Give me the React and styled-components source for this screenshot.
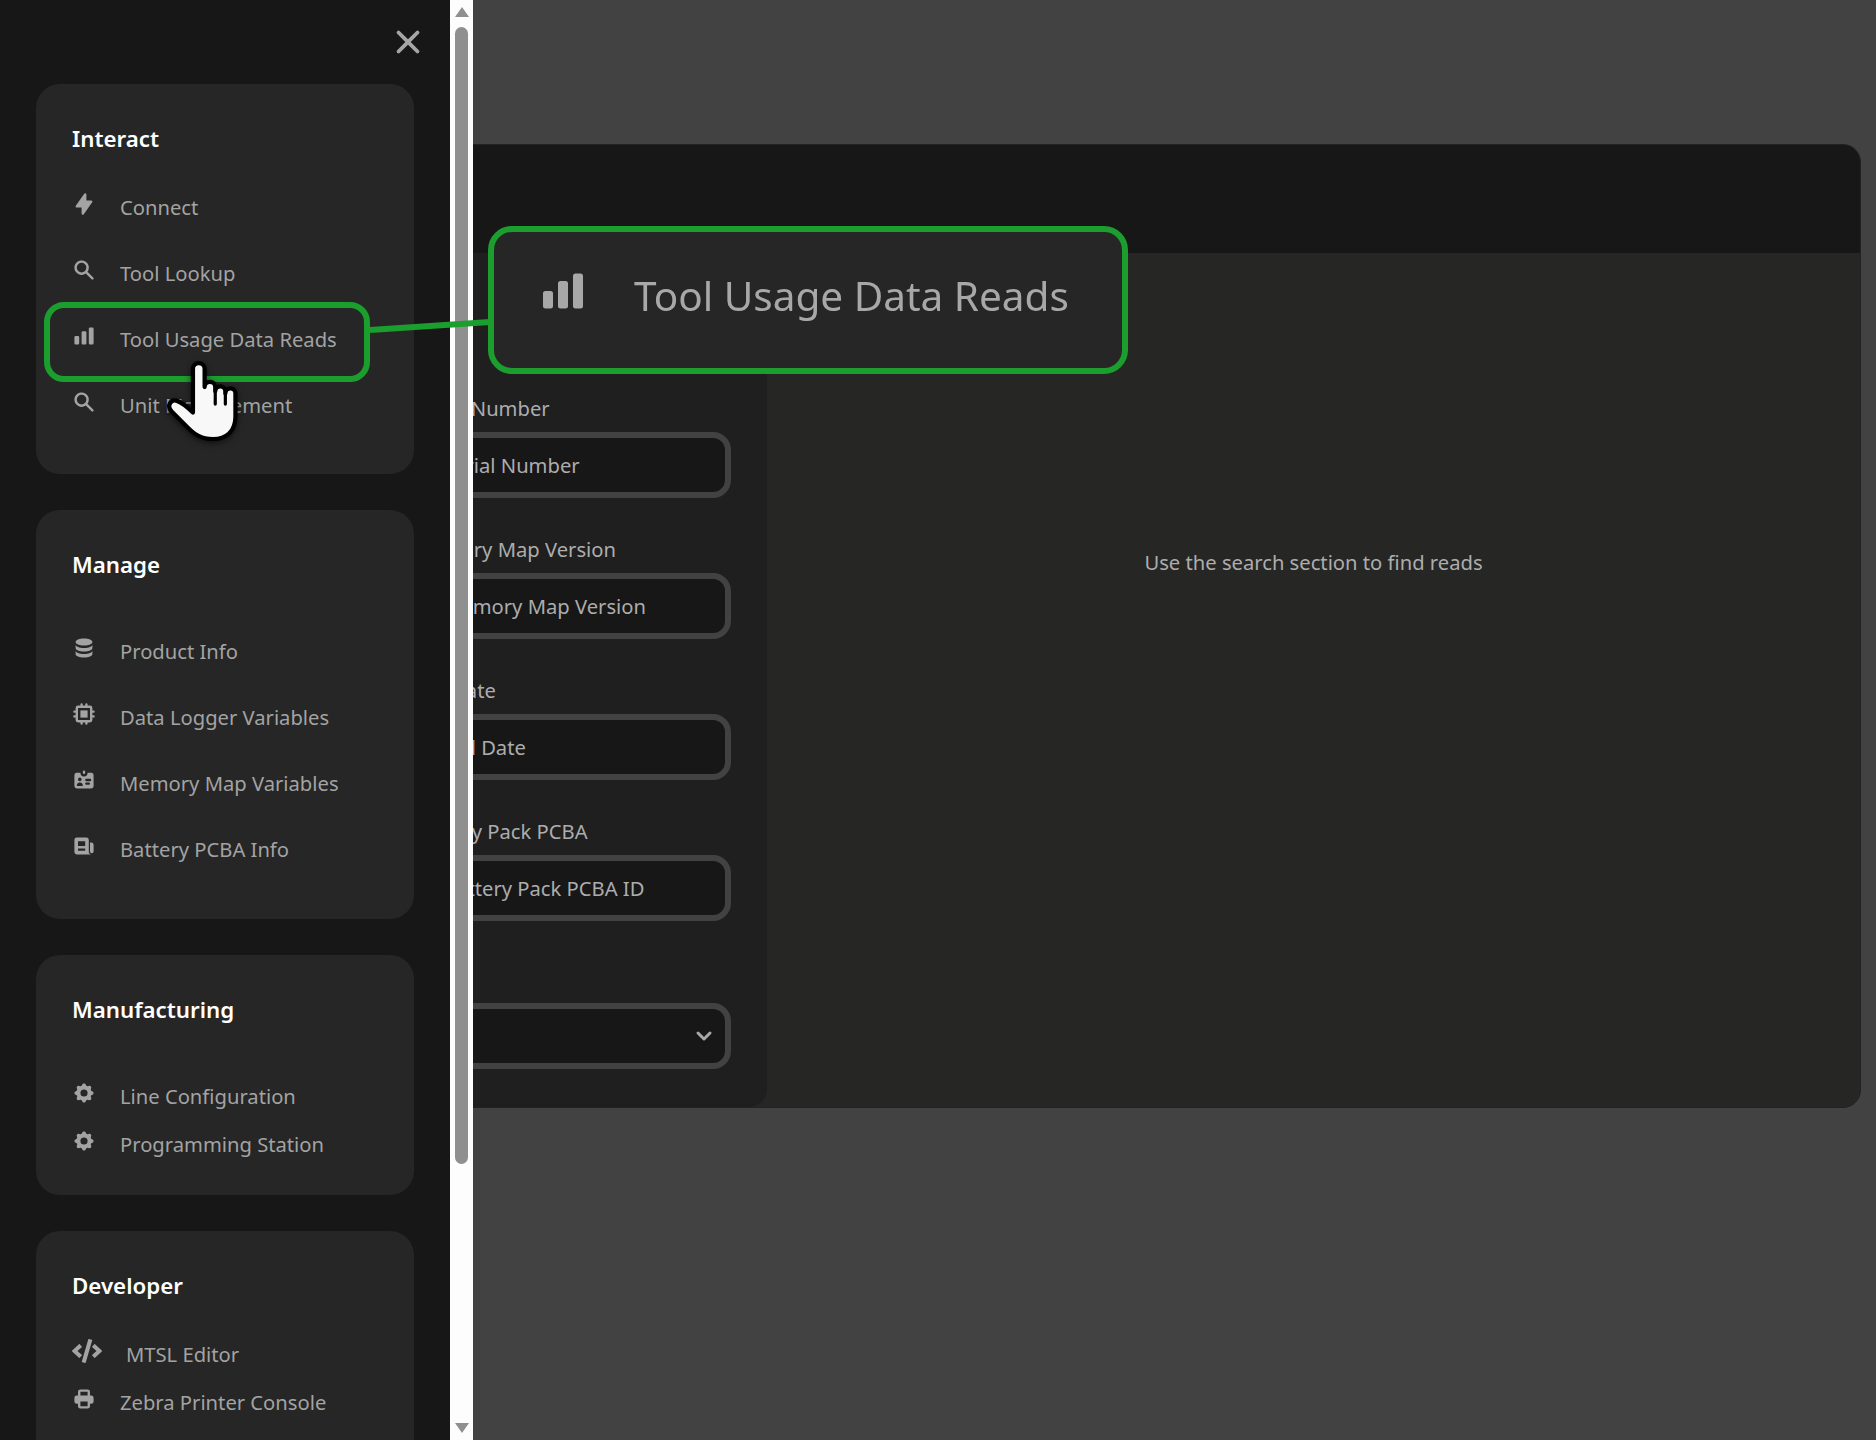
import React from "react";
import styled, { createGlobalStyle } from "styled-components";
import {
  HiLightningBolt, HiSearch, HiChartBar, HiDatabase, HiChip, HiIdentification,
  HiNewspaper, HiCog, HiPrinter, HiX, HiChevronDown,
} from "react-icons/hi";
import { FaCode } from "react-icons/fa";

const Global = createGlobalStyle`
  html, body { margin: 0; padding: 0; background: #424242; }
  body { font-family: "Noto Sans", "Open Sans", sans-serif; overflow: hidden; }
  * { box-sizing: border-box; }
`;

const Stage = styled.div`
  position: relative;
  width: 1876px;
  height: 1440px;
  overflow: hidden;
  background: #424242;
`;

const Page = styled.main`
  height: 100%;
  padding: 144px 15px 0 383px;
`;

const Panel = styled.section`
  height: 964px;
  display: flex;
  flex-direction: column;
  border: 1px solid #222222;
  border-radius: 18px;
  overflow: hidden;
  background: #262625;
`;

const PanelHead = styled.header`
  height: 108px;
  flex: none;
  background: #171717;
`;

const PanelBody = styled.div`
  flex: 1;
  display: flex;
  min-height: 0;
`;

const Form = styled.form`
  width: 383px;
  flex: none;
  display: flex;
  flex-direction: column;
  padding: 141px 36px 0 29px;
  background: #1f1f1f;
  border-bottom-right-radius: 18px;
`;

const Field = styled.div`
  display: flex;
  flex-direction: column;
  margin-top: ${(p) => p.$top || 0}px;
`;

const Label = styled.label`
  height: 28px;
  margin-bottom: 10px;
  font-size: 20.2px;
  line-height: 28px;
  color: #adadad;
  white-space: nowrap;
`;

const TextInput = styled.input`
  width: 100%;
  height: 66px;
  padding: 0 20px 0 24px;
  border: 6px solid #424242;
  border-radius: 18px;
  outline: none;
  background: #171717;
  font: inherit;
  font-size: 20.2px;
  color: #adadad;
  &::placeholder { color: #adadad; opacity: 1; }
`;

const SelectBox = styled.div`
  height: 66px;
  display: flex;
  align-items: center;
  justify-content: flex-end;
  padding-right: 6px;
  border: 6px solid #424242;
  border-radius: 18px;
  background: #171717;
  color: #a8a8a8;
  font-size: 30px;
`;

const Results = styled.div`
  flex: 1;
  padding-top: 295px;
  text-align: center;
  font-size: 20.2px;
  line-height: 28px;
  color: #adadad;
`;

const Drawer = styled.aside`
  position: absolute;
  top: 0;
  left: 0;
  bottom: 0;
  width: 473px;
  display: flex;
`;

const DrawerContent = styled.nav`
  width: 450px;
  flex: none;
  overflow: hidden;
  background: #171717;
`;

const CloseRow = styled.div`
  height: 84px;
  display: flex;
  align-items: center;
  justify-content: flex-end;
  padding-right: 23px;
  font-size: 38px;
  color: #a6a6a6;
  svg { display: block; }
`;

const Cards = styled.div`
  display: flex;
  flex-direction: column;
  gap: 36px;
  padding: 0 36px;
`;

const Card = styled.section`
  padding: 36px 36px ${(p) => p.$bottom}px;
  border-radius: 24px;
  background: #262626;
`;

const CardTitle = styled.h2`
  height: 38px;
  margin: 0 0 ${(p) => p.$gap}px;
  font-size: 22.3px;
  font-weight: 600;
  line-height: 38px;
  color: #ffffff;
`;

const NavRow = styled.a`
  height: ${(p) => p.$h}px;
  display: flex;
  align-items: center;
  gap: 24px;
  font-size: 20.2px;
  color: #a3a3a3;
  white-space: nowrap;
  svg {
    flex: none;
    width: ${(p) => (p.$wide ? 30 : 24)}px;
    height: 24px;
    margin-bottom: 6px;
  }
`;

const Scrollbar = styled.div`
  width: 23px;
  flex: none;
  display: flex;
  flex-direction: column;
  align-items: center;
  padding: 7px 0;
  background: #fdfdfd;
`;

const Arrow = styled.div`
  width: 0;
  height: 0;
  flex: none;
  border-left: 7.5px solid transparent;
  border-right: 7.5px solid transparent;
  ${(p) => (p.$down ? "border-top: 10px solid #8f8f8f;" : "border-bottom: 10px solid #8f8f8f;")}
`;

const Thumb = styled.div`
  width: 13px;
  height: 1137px;
  margin-top: 10px;
  margin-bottom: auto;
  border-radius: 7px;
  background: #8f8f8f;
`;

const Highlight = styled.div`
  position: absolute;
  left: 44px;
  top: 302px;
  width: 326px;
  height: 80px;
  border: 6px solid #1b9e2e;
  border-radius: 20px;
`;

const Connector = styled.svg`
  position: absolute;
  left: 368px;
  top: 316px;
`;

const Callout = styled.div`
  position: absolute;
  left: 488px;
  top: 226px;
  width: 640px;
  height: 148px;
  display: flex;
  align-items: center;
  gap: 46px;
  padding: 0 0 10px 44px;
  border: 6px solid #1b9e2e;
  border-radius: 24px;
  background: #262626;
  color: #a8a8a8;
  font-size: 40.5px;
  white-space: nowrap;
  svg { width: 50px; height: 50px; flex: none; margin-bottom: 8px; }
  span { filter: blur(0.4px); }
`;

const Pointer = styled.svg`
  position: absolute;
  left: 160px;
  top: 355px;
  filter: drop-shadow(0 2px 3px rgba(0, 0, 0, 0.55));
`;

const groups = [
  {
    title: "Interact", gap: 16, h: 66, bottom: 36,
    items: [
      [HiLightningBolt, "Connect"],
      [HiSearch, "Tool Lookup"],
      [HiChartBar, "Tool Usage Data Reads"],
      [HiSearch, "Unit Management"],
    ],
  },
  {
    title: "Manage", gap: 34, h: 66, bottom: 37,
    items: [
      [HiDatabase, "Product Info"],
      [HiChip, "Data Logger Variables"],
      [HiIdentification, "Memory Map Variables"],
      [HiNewspaper, "Battery PCBA Info"],
    ],
  },
  {
    title: "Manufacturing", gap: 43, h: 48, bottom: 27,
    items: [
      [HiCog, "Line Configuration"],
      [HiCog, "Programming Station"],
    ],
  },
  {
    title: "Developer", gap: 25, h: 48, bottom: 36,
    items: [
      [FaCode, "MTSL Editor", true],
      [HiPrinter, "Zebra Printer Console"],
    ],
  },
];

const fields = [
  ["Serial Number", "Serial Number"],
  ["Memory Map Version", "Memory Map Version"],
  ["Sell Date", "Sell Date"],
  ["Battery Pack PCBA", "Battery Pack PCBA ID"],
];

export default function App() {
  return (
    <Stage>
      <Global />
      <Page>
        <Panel>
          <PanelHead />
          <PanelBody>
            <Form>
              {fields.map(([label, placeholder], i) => (
                <Field key={label} $top={i ? 37 : 0}>
                  <Label>{label}</Label>
                  <TextInput placeholder={placeholder} readOnly />
                </Field>
              ))}
              <Field $top={44}>
                <Label>Type</Label>
                <SelectBox><HiChevronDown /></SelectBox>
              </Field>
            </Form>
            <Results>Use the search section to find reads</Results>
          </PanelBody>
        </Panel>
      </Page>

      <Drawer>
        <DrawerContent>
          <CloseRow><HiX /></CloseRow>
          <Cards>
            {groups.map((g) => (
              <Card key={g.title} $bottom={g.bottom}>
                <CardTitle $gap={g.gap}>{g.title}</CardTitle>
                {g.items.map(([Icon, label, wide]) => (
                  <NavRow key={label} $h={g.h} $wide={wide}>
                    <Icon />
                    <span>{label}</span>
                  </NavRow>
                ))}
              </Card>
            ))}
          </Cards>
        </DrawerContent>
        <Scrollbar>
          <Arrow />
          <Thumb />
          <Arrow $down />
        </Scrollbar>
      </Drawer>

      <Highlight />
      <Connector width="124" height="18" viewBox="0 0 124 18">
        <line x1="2" y1="14" x2="122" y2="6" stroke="#1b9e2e" strokeWidth="6" />
      </Connector>
      <Callout>
        <HiChartBar />
        <span>Tool Usage Data Reads</span>
      </Callout>
      <Pointer width="85" height="96" viewBox="0 0 80 90">
        <path
          d="M31 13a5.5 5.5 0 0 1 11 0V30a5 5 0 0 1 10 0V34a4.75 4.75 0 0 1 9.5 0V36a4.75 4.75 0 0 1 9.5 0V58C71 72 62 79 50 79C38 79 32 74 26 68L11 53C6 48 10 41 16 43C22 45 27 50 31 54Z"
          fill="#f8f8f8"
          stroke="#000"
          strokeWidth="4"
          strokeLinejoin="round"
        />
        <path d="M52 34V46M61.5 36V46" stroke="#000" strokeWidth="3" strokeLinecap="round" fill="none" />
      </Pointer>
    </Stage>
  );
}
